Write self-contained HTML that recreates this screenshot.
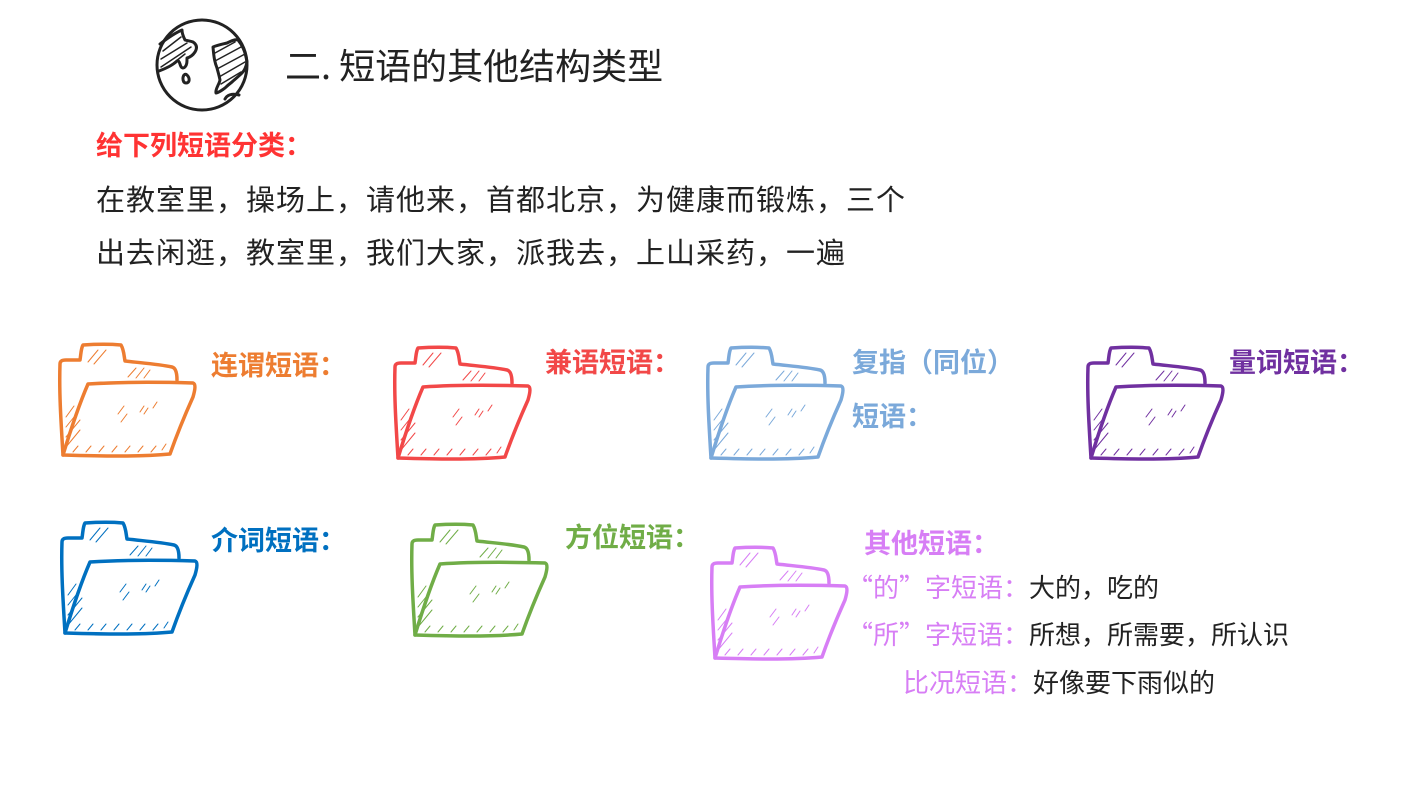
<!DOCTYPE html>
<html><head><meta charset="utf-8"><style>
body{margin:0;width:1406px;height:785px;background:#fff;position:relative;overflow:hidden;font-family:"Liberation Sans","Noto Sans CJK SC",sans-serif;}
.t{position:absolute;white-space:nowrap;line-height:1;}
.b{font-weight:bold;font-size:27px;font-family:"Noto Sans CJK SC",sans-serif;}
.c{font-family:"Noto Sans CJK SC",sans-serif;}
svg.f{position:absolute;width:140px;height:120px;overflow:visible}
</style></head><body>
<svg width="0" height="0" style="position:absolute"><defs>
<g id="fold" fill="none" stroke="currentColor" stroke-linecap="round" stroke-linejoin="round">
<path stroke-width="3.5" d="M5,113 C3,80 1,50 2,22 C2,19 4,18 8,18 L22,18 C23,12 23,6 25,3 C40,2 52,2 63,3 C66,8 66,14 67,19 C84,21 100,22 114,25 C118,26 119,32 119,38"/>
<path stroke-width="3.5" d="M5,113 C12,90 20,65 30,42 C60,40 100,40 135,41 C138,42 137,48 135,55 C126,75 118,95 112,112 C80,115 40,114 5,113 Z"/>
<path stroke-width="1" d="M30,20 L40,8 M36,22 L48,8 M70,35 L78,26 M78,36 L86,26 M86,36 L92,28 M8,75 L16,64 M8,85 L20,70 M8,95 L22,78 M8,105 L22,88 M60,72 L66,64 M63,80 L69,72 M82,70 L86,64 M86,72 L90,66 M95,66 L99,60 M15,110 L20,104 M28,110 L33,104 M41,110 L46,104 M54,110 L59,104 M67,110 L72,104 M80,110 L85,104 M93,110 L98,104 M104,108 L108,102"/>
</g></defs></svg>

<svg style="position:absolute;left:155px;top:17px" width="96" height="96" viewBox="0 0 96 96" fill="none" stroke="#222" stroke-width="3" stroke-linecap="round" stroke-linejoin="round">
<circle cx="47" cy="48" r="45"/>
<path d="M5,27 C14,20 20,16 27,13 C27,17 29,21 30,23 C33,24 36,24 38,25 C41,27 43,30 40,35 C38,38 36,40 32,41 C32,45 32,48 30,50 C28,52 26,51 25,47 C24,44 23,43 22,44 C18,48 12,51 4,54"/>
<path stroke-width="1.5" d="M8,34 L26,20 M6,42 L32,26 M6,50 L36,30 M16,48 L30,37"/>
<path d="M29,58 C27,61 28,66 31,66 C35,66 35,61 32,58 C31,57 30,57 29,58 Z"/>
<path d="M58,30 C63,28 68,27 72,26 C76,24 80,22 83,23 C87,28 90,33 92,45 C91,50 89,54 87,56 C83,60 79,63 77,65 C73,68 71,70 70,71 C67,73 65,75 61,76 C60,72 64,68 65,63 C64,58 63,55 62,51 C60,46 59,42 58,30 Z"/>
<path stroke-width="1.5" d="M60,36 L80,25 M60,44 L86,30 M62,52 L90,37 M64,60 L90,45 M66,67 L86,55"/>
<path d="M70,82 C72,78 77,76 84,78"/>
</svg>
<div class="t c" style="left:285px;top:46px;font-size:36px;color:#222">二. 短语的其他结构类型</div>

<div class="t c" style="left:96px;top:130px;font-size:27px;font-weight:bold;color:#f33">给下列短语分类：</div>
<div class="t c" style="left:96px;top:184px;font-size:29px;letter-spacing:1px;color:#222">在教室里，操场上，请他来，首都北京，为健康而锻炼，三个</div>
<div class="t c" style="left:96px;top:237px;font-size:29px;letter-spacing:1px;color:#222">出去闲逛，教室里，我们大家，派我去，上山采药，一遍</div>

<svg class="f" style="left:58px;top:342px;color:#ED7D31"><use href="#fold"/></svg>
<div class="t b" style="left:211px;top:350px;color:#ED7D31">连谓短语：</div>
<svg class="f" style="left:393px;top:345px;color:#F24848"><use href="#fold"/></svg>
<div class="t b" style="left:545px;top:347px;color:#F24848">兼语短语：</div>
<svg class="f" style="left:706px;top:345px;color:#7BA9DA"><use href="#fold"/></svg>
<div class="t b" style="left:852px;top:347px;color:#7BA9DA">复指（同位）</div>
<div class="t b" style="left:852px;top:401px;color:#7BA9DA">短语：</div>
<svg class="f" style="left:1086px;top:345px;color:#7030A0"><use href="#fold"/></svg>
<div class="t b" style="left:1229px;top:347px;color:#7030A0">量词短语：</div>

<svg class="f" style="left:60px;top:520px;color:#0070C0"><use href="#fold"/></svg>
<div class="t b" style="left:211px;top:525px;color:#0070C0">介词短语：</div>
<svg class="f" style="left:410px;top:522px;color:#70AD47"><use href="#fold"/></svg>
<div class="t b" style="left:565px;top:522px;color:#70AD47">方位短语：</div>
<svg class="f" style="left:710px;top:545px;color:#D77EF5"><use href="#fold"/></svg>
<div class="t b" style="left:864px;top:528px;color:#D77EF5">其他短语：</div>

<div class="t c" style="left:847px;top:574px;font-size:26px;color:#D77EF5">“的”字短语：<span style="color:#222">大的，吃的</span></div>
<div class="t c" style="left:847px;top:621px;font-size:26px;color:#D77EF5">“所”字短语：<span style="color:#222">所想，所需要，所认识</span></div>
<div class="t c" style="left:903px;top:669px;font-size:26px;color:#D77EF5">比况短语：<span style="color:#222">好像要下雨似的</span></div>
</body></html>
